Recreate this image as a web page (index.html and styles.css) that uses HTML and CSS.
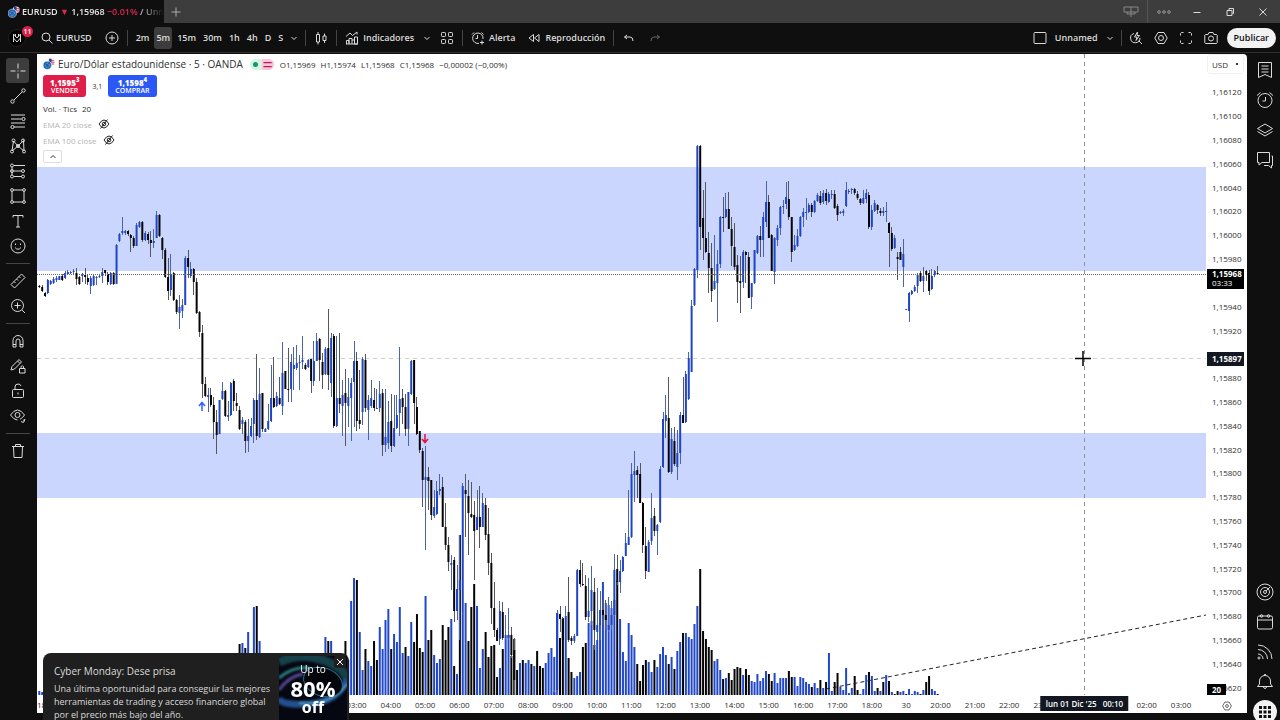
FILE: index.html
```html
<!DOCTYPE html>
<html lang="es">
<head>
    <meta charset="UTF-8">
    <meta name="viewport" content="width=device-width, initial-scale=1.0">
    <title>EURUSD 1,15968 −0.01% / Unnamed</title>
    <link rel="stylesheet" href="styles.css">
</head>
<body>
    <svg class="sprite" aria-hidden="true">
        <symbol id="chevron" viewBox="0 0 8 8"><path d="M1.5 3 4 5.5 6.5 3"/></symbol>
        <symbol id="pair" viewBox="0 0 14 14">
            <circle cx="9.5" cy="4.5" r="4" fill="#e9e4f0" stroke="none"/>
            <path d="M9 3h4M9 5h4.500M9 7h4" stroke="#d5475e" stroke-width="1"/>
            <path d="M7 1h3v4H7z" fill="#2b3f8f" stroke="none"/>
            <circle cx="5" cy="8.500" r="4.800" fill="#1d62b0" stroke="#fff" stroke-width=".6"/>
            <circle cx="5" cy="8.500" r="2.400" stroke="#9dc4ea" stroke-dasharray="1 1"/>
        </symbol>
    </svg>

    <div class="app">
        <header class="titlebar">
            <div class="tab">
                <svg class="pair-icon"><use href="#pair"/></svg>
                <span>EURUSD <span class="down">▼</span> 1,15968 <span class="down">−0.01%</span> / Unn</span>
            </div>
            <button class="new-tab" aria-label="Nueva pestaña"><svg viewBox="0 0 12 12"><path d="M6 1.500v9M1.500 6h9"/></svg></button>
            <div class="window-controls">
                <button aria-label="Diseño"><svg class="wide" viewBox="0 0 18 14"><path d="M2 2h14v5H2zM9 2v10M5 7v2h8V7"/></svg></button>
                <button class="more" aria-label="Más"><svg viewBox="0 0 14 14"><circle cx="2" cy="7" r="1.300"/><circle cx="7" cy="7" r="1.300"/><circle cx="12" cy="7" r="1.300"/></svg></button>
                <button aria-label="Minimizar"><svg viewBox="0 0 14 14"><path d="M3.500 7.500h7"/></svg></button>
                <button aria-label="Restaurar"><svg viewBox="0 0 14 14"><path d="M4 5.500h5v5H4zM6 5V3.500h4.500v5H9.500"/></svg></button>
                <button aria-label="Cerrar"><svg viewBox="0 0 14 14"><path d="m3.500 3.500 7 7M10.500 3.500l-7 7"/></svg></button>
            </div>
        </header>

        <nav class="toolbar">
            <button class="account" aria-label="Cuenta">
                <svg viewBox="0 0 18 18"><circle cx="9" cy="9" r="8.500" fill="#000" stroke="#222"/><path d="M5.500 13V5L9 9l3.500-4v8M5.500 9 9 13l3.500-4M7.500 5v3M10.500 5v3"/></svg>
                <span class="badge">11</span>
            </button>
            <button class="symbol"><svg viewBox="0 0 14 14"><circle cx="6" cy="6" r="4"/><path d="m9 9 3.500 3.500"/></svg>EURUSD</button>
            <button class="icon" aria-label="Comparar"><svg viewBox="0 0 14 14"><circle cx="7" cy="7" r="6"/><path d="M7 4v6M4 7h6"/></svg></button>
            <span class="sep"></span>
            <div class="intervals">
                <button>2m</button>
                <button class="active">5m</button>
                <button>15m</button>
                <button>30m</button>
                <button>1h</button>
                <button>4h</button>
                <button>D</button>
                <button>S</button>
                <button aria-label="Más intervalos"><svg class="chevron"><use href="#chevron"/></svg></button>
            </div>
            <span class="sep"></span>
            <button class="icon" aria-label="Velas"><svg viewBox="0 0 14 14"><path d="M2.500 3.500h3v7.500h-3zM4 1v2.500M4 11v2.500M9 5h3v4.500H9zM10.500 2.500V5M10.500 9.500V12"/></svg></button>
            <span class="sep"></span>
            <button class="labelled indicators"><svg viewBox="0 0 14 14"><path d="M1 5.500 5 2l2.500 2.500L12 1M12 1v2.500M1.500 13V9.500H4V13M4 13V7.500h3V13M7 9h2.500v4M9.500 13V6h3v7zM1 13h12"/></svg>Indicadores</button>
            <button class="drop" aria-label="Indicadores favoritos"><svg class="chevron"><use href="#chevron"/></svg></button>
            <button class="icon" aria-label="Plantillas"><svg viewBox="0 0 14 14"><rect x="1.500" y="1.500" width="4" height="4" rx=".8"/><rect x="8.500" y="1.500" width="4" height="4" rx=".8"/><rect x="1.500" y="8.500" width="4" height="4" rx=".8"/><rect x="8.500" y="8.500" width="4" height="4" rx=".8"/></svg></button>
            <span class="sep"></span>
            <button class="labelled"><svg viewBox="0 0 14 14"><path d="M8 12.300A5.200 5.200 0 1 1 12 8M6.500 4v3.500H4.500M1 3.500 3 1.500M10.500 1.500l2 2M11 9.500v4M9 11.500h4"/></svg>Alerta</button>
            <button class="labelled replay"><svg viewBox="0 0 14 14"><path d="M6.500 3.500v7L2 7zM12 3.500v7L7.500 7z"/></svg>Reproducción</button>
            <span class="sep"></span>
            <button class="icon" aria-label="Deshacer"><svg viewBox="0 0 14 14"><path d="M5 4 2.500 6 5 8M2.500 6H8q3 0 3 4"/></svg></button>
            <button class="icon dim" aria-label="Rehacer"><svg viewBox="0 0 14 14"><path d="M9 4l2.500 2L9 8M11.500 6H6q-3 0-3 4"/></svg></button>

            <div class="toolbar-right">
                <button class="labelled" aria-label="Distribución"><svg viewBox="0 0 14 14"><rect x="1" y="1.500" width="12" height="11" rx="1"/></svg></button>
                <button class="layout-name">Unnamed</button>
                <button class="drop" aria-label="Gestionar diseños"><svg class="chevron"><use href="#chevron"/></svg></button>
                <span class="sep"></span>
                <button class="icon" aria-label="Búsqueda rápida"><svg viewBox="0 0 14 14"><path d="M5 2.500A4.700 4.700 0 1 0 11 7M9.700 9.700 13 13M8.500 1 5.500 6H8L7 9.500 10.500 4.500H8z"/></svg></button>
                <button class="icon" aria-label="Ajustes"><svg viewBox="0 0 14 14"><path d="M4 1.500h6L13.200 7 10 12.500H4L.8 7z"/><circle cx="7" cy="7" r="2.500"/></svg></button>
                <button class="icon" aria-label="Pantalla completa"><svg viewBox="0 0 14 14"><path d="M1.500 4.500v-2l1-1h2M9.500 1.500h2l1 1v2M12.500 9.500v2l-1 1h-2M4.500 12.500h-2l-1-1v-2"/></svg></button>
                <button class="icon" aria-label="Captura"><svg viewBox="0 0 14 14"><path d="M1.500 3.500H4L5 1.500h4l1 2h2.500l.7.7v7.600l-.7.700H1.500l-.7-.7V4.200z"/><circle cx="7" cy="7.500" r="2.500"/></svg></button>
                <button class="publish">Publicar</button>
            </div>
        </nav>

        <aside class="drawing-bar">
            <button class="active" aria-label="Cursor"><svg viewBox="0 0 18 18"><path d="M9 1.500v5M9 11.500v5M1.500 9h5M11.500 9h5M9 8.500v1"/></svg></button>
            <button aria-label="Línea de tendencia"><svg viewBox="0 0 18 18"><circle cx="3.500" cy="14.500" r="1.700"/><circle cx="14.500" cy="3.500" r="1.700"/><path d="m5 13 8-8"/></svg></button>
            <button aria-label="Fibonacci"><svg viewBox="0 0 18 18"><path d="M2 3h14M2 7h10.500M2 11h14M5 15h11"/><circle cx="14.500" cy="7" r="1.600"/><circle cx="3.500" cy="15" r="1.600"/></svg></button>
            <button aria-label="Patrones"><svg viewBox="0 0 18 18"><path d="M3 14 4.500 4 9 9l5.500-5.500L15 14 9 9z"/><circle cx="3" cy="14.500" r="1.500"/><circle cx="4.500" cy="3.500" r="1.500"/><circle cx="9" cy="9" r="1.500"/><circle cx="14" cy="3.500" r="1.500"/><circle cx="15" cy="14.500" r="1.500"/></svg></button>
            <button aria-label="Predicción"><svg viewBox="0 0 18 18"><path d="M5 3.500h11M5 9h7.500M5 14.500h7.500M3 5v8"/><circle cx="3" cy="3.500" r="1.500"/><circle cx="3" cy="9" r="1.500"/><circle cx="3" cy="14.500" r="1.500"/><circle cx="14" cy="9" r="1.500"/><circle cx="14" cy="14.500" r="1.500"/></svg></button>
            <button aria-label="Formas"><svg viewBox="0 0 18 18"><path d="M4 3h10M4 15h10M3 4v10M15 4v10"/><circle cx="3" cy="3" r="1.400"/><circle cx="15" cy="3" r="1.400"/><circle cx="3" cy="15" r="1.400"/><circle cx="15" cy="15" r="1.400"/></svg></button>
            <button aria-label="Texto"><svg viewBox="0 0 18 18"><path d="M4 5.500V3.500h10v2M9 3.500v11.500M7 15h4"/></svg></button>
            <button aria-label="Iconos"><svg viewBox="0 0 18 18"><circle cx="9" cy="9" r="7"/><path d="M6 10.500q3 3.500 6 0M6.500 6.500v1.500M11.500 6.500v1.500"/></svg></button>
            <hr>
            <button aria-label="Medir"><svg viewBox="0 0 18 18"><path d="M2 12.500 12.500 2 16 5.500 5.500 16zM5 9.500l1.500 1.500M7.500 7 9 8.500M10 4.500 11.500 6"/></svg></button>
            <button aria-label="Ampliar"><svg viewBox="0 0 18 18"><circle cx="8.500" cy="8.500" r="6"/><path d="m13 13 3 3M8.500 5.500v6M5.500 8.500h6"/></svg></button>
            <hr>
            <button aria-label="Imán"><svg viewBox="0 0 18 18"><path d="M4 15V8.500a5 5 0 0 1 10 0V15h-3V9a2 2 0 0 0-4 0v6zM4 12.500h3M11 12.500h3"/></svg></button>
            <button aria-label="Modo dibujo"><svg viewBox="0 0 18 18"><path d="m2 13 1-3.500L10 2.500 12.500 5l-7 7zM8.500 4 11 6.500M10.500 11.500H16V16h-5.500zM12 11.500V9.500q1.300-1.500 2.500 0v2"/></svg></button>
            <button aria-label="Bloquear"><svg viewBox="0 0 18 18"><rect x="3.500" y="7.500" width="11" height="8" rx="1"/><path d="M6 7.500V5q0-3 3-3 2.500 0 3 2M9 10.500v2"/></svg></button>
            <button aria-label="Ocultar"><svg viewBox="0 0 18 18"><path d="M1.500 8q3.500-5 7-5t7 5q-2 3-4.500 4.300M8.500 13Q5 13 1.500 8M12 14.500l2.500 1 1.500-3-2 1"/><circle cx="8.500" cy="8" r="2.500"/></svg></button>
            <hr>
            <button aria-label="Eliminar"><svg viewBox="0 0 18 18"><path d="M3 4.500h12M6.500 4.500v-2h5v2M4.500 4.500l.5 11h8l.5-11"/></svg></button>
        </aside>

        <main class="chart">
            <div class="plot">
                <svg class="canvas" viewBox="0 0 1169 641" preserveAspectRatio="none" role="img" aria-label="Gráfico EURUSD 5 minutos">
                    <rect class="zone" x="0" y="113" width="1169" height="104"/>
                    <rect class="zone" x="0" y="379" width="1169" height="65"/>
                    <path class="cross-h" d="M0 304.500H1169"/>
                    <g id="volume"></g>
                    <g id="candles"></g>
                    <path class="last-price" d="M0 220.500H1169"/>
                    <path class="trend" d="M789 635 1169 561"/>
                    <path class="cross-v" d="M1047.500 0V641"/>
                    <path class="buy-mark" d="M165 357v-8M162 352l3-3.500 3 3.500"/>
                    <path class="sell-mark" d="M388 380v8M385 385l3 3.500 3-3.500"/>
                    <path class="pointer" d="M1046 297v15M1038 304.500h16"/>
                </svg>

                <section class="legend">
                    <h1>
                        <svg class="pair-icon"><use href="#pair"/></svg>
                        <span class="name">Euro/Dólar estadounidense · 5 · OANDA</span>
                        <span class="market"><i class="open"></i><i class="delay">=</i></span>
                        <span class="ohlc"><span>O1,15969</span><span>H1,15974</span><span>L1,15968</span><span>C1,15968</span><span>−0,00002 (−0,00%)</span></span>
                    </h1>
                    <div class="trade">
                        <button class="sell"><b>1,1595<sup>3</sup></b>VENDER</button>
                        <span class="spread">3,1</span>
                        <button class="buy"><b>1,1598<sup>4</sup></b>COMPRAR</button>
                    </div>
                    <p>Vol. · Tics <span class="value">20</span></p>
                    <p class="muted">EMA 20 close <svg class="eye" viewBox="0 0 12 12"><path d="M1 6q2.500-4 5-4t5 4q-2.500 4-5 4T1 6zM2.500 10.500l7-9"/><circle cx="6" cy="6" r="1.800"/></svg></p>
                    <p class="muted">EMA 100 close <svg class="eye" viewBox="0 0 12 12"><path d="M1 6q2.500-4 5-4t5 4q-2.500 4-5 4T1 6zM2.500 10.500l7-9"/><circle cx="6" cy="6" r="1.800"/></svg></p>
                    <button class="collapse" aria-label="Contraer"><svg class="chevron up"><use href="#chevron"/></svg></button>
                </section>
            </div>

            <div class="price-axis">
                <select aria-label="Divisa"><option>USD</option></select>
                <ol id="prices"></ol>
                <button class="axis-settings" aria-label="Ajustes de escala"><svg viewBox="0 0 14 14"><path d="M4 1.500h6L13.200 7 10 12.500H4L.8 7z"/><circle cx="7" cy="7" r="2"/></svg></button>
                <div class="tag last"><b>1,15968</b>03:33</div>
                <div class="tag cursor"><b>1,15897</b></div>
                <div class="tag vol"><b>20</b></div>
            </div>

            <div class="time-axis">
                <ol id="hours"></ol>
                <div class="time-tag"><span>lun 01 Dic '25</span><span>00:10</span></div>
            </div>
        </main>

        <aside class="side-bar">
            <div>
                <button aria-label="Lista de seguimiento"><svg viewBox="0 0 18 18"><path d="M2.500 1.500h13v15l-6.500-3-6.500 3zM5.500 5h7M5.500 8h7M5.500 11h7"/></svg></button>
                <button aria-label="Alertas"><svg viewBox="0 0 18 18"><circle cx="9" cy="9.500" r="7"/><path d="M9.500 6v4h-3M1 4.500 4.500 1.500M13.500 1.500 17 4.500"/></svg></button>
                <button aria-label="Árbol de objetos"><svg viewBox="0 0 18 18"><path d="m9 3 7.500 4.500L9 12 1.500 7.500zM1.500 10.500 9 15l7.500-4.500"/></svg></button>
                <button aria-label="Chats"><svg viewBox="0 0 18 18"><path d="M1.500 1.500h12v10H6L3 14v-2.500H1.500zM15.500 5h1v9.500h-1V17l-3-2.500H8"/></svg></button>
            </div>
            <div class="lower">
                <button aria-label="Analizadores"><svg viewBox="0 0 18 18"><circle cx="9" cy="9" r="8"/><circle cx="9" cy="9" r="4.500"/><circle cx="9" cy="9" r="1.500"/><path d="m10 8 4-4"/></svg></button>
                <button aria-label="Calendario"><svg viewBox="0 0 18 18"><rect x="1.500" y="3" width="15" height="13" rx="1.500"/><path d="M1.500 7h15"/><circle cx="5.500" cy="3" r="1.300"/><circle cx="12.500" cy="3" r="1.300"/></svg></button>
                <button aria-label="Noticias"><svg viewBox="0 0 18 18"><path d="M2 2a14 14 0 0 1 14 14M2 6.500A9.500 9.500 0 0 1 11.500 16M2 11a5 5 0 0 1 5 5"/><circle cx="3" cy="15" r="1"/></svg></button>
                <button aria-label="Notificaciones"><svg viewBox="0 0 18 18"><path d="M1.500 13.500h15l-2-2.500V8a5.500 5.500 0 0 0-11 0v3zM7 13.500q2 4 4 0M8 2.500 9 1l1 1.500"/></svg></button>
                <button class="apps" aria-label="Productos"><svg viewBox="0 0 18 18"><path d="M3 3h3v3H3zM7.500 3h3v3h-3zM12 3h3v3h-3zM3 7.500h3v3H3zM7.500 7.500h3v3h-3zM12 7.500h3v3h-3zM3 12h3v3H3zM7.500 12h3v3h-3zM12 12h3v3h-3z"/></svg></button>
            </div>
        </aside>
    </div>

    <aside class="toast">
        <div class="toast-text">
            <h2>Cyber Monday: Dese prisa</h2>
            <p>Una última oportunidad para conseguir las mejores herramientas de trading y acceso financiero global por el precio más bajo del año.</p>
        </div>
        <div class="promo">
            <svg viewBox="0 0 68 70" preserveAspectRatio="none" aria-hidden="true">
                <g class="glow">
                    <path d="M0 6Q22-4 44 4T68 24" stroke="#16404a" stroke-width="9"/>
                    <path d="M0 22Q14 10 30 12" stroke="#2b7f86" stroke-width="3"/>
                    <path d="M68 24Q58 46 30 48T0 42" stroke="#234f8e" stroke-width="7"/>
                    <path d="M68 28Q52 50 20 47" stroke="#57a6c9" stroke-width="2"/>
                    <path d="M0 34q10-14 24-16" stroke="#5a489a" stroke-width="3"/>
                </g>
                <ellipse cx="44" cy="26" rx="20" ry="14" fill="#04060c" stroke="#2a6d8c" transform="rotate(20 44 26)"/>
            </svg>
            <div class="promo-text"><span>Up to</span><strong>80%</strong><b>off</b></div>
        </div>
        <button class="close" aria-label="Cerrar"><svg viewBox="0 0 10 10"><path d="m2 2 6 6M8 2 2 8"/></svg></button>
    </aside>

    <script src="chart.js"></script>
</body>
</html>
```

FILE: styles.css
```css
* {
    box-sizing: border-box;
}
body {
    margin: 0;
    background: #0f0f0f;
    color: #dbdbdb;
    font-family: "Open Sans", "Noto Sans", sans-serif;
    font-size: 9px;
    overflow: hidden;
}
button {
    display: flex;
    align-items: center;
    justify-content: center;
    padding: 0;
    border: 0;
    background: none;
    color: inherit;
    font: inherit;
    cursor: pointer;
}
ol {
    margin: 0;
    padding: 0;
    list-style: none;
}
svg {
    width: 14px;
    height: 14px;
    flex: none;
    fill: none;
    stroke: currentColor;
    stroke-width: 1;
}
.sprite {
    position: absolute;
    width: 0;
    height: 0;
}
.chevron {
    width: 8px;
    height: 8px;
}
.up {
    transform: rotate(180deg);
}
.app {
    display: grid;
    grid-template: 23px 30px 1fr / 37px 1fr 33px;
    height: 100vh;
}

/* Title bar */
.titlebar {
    grid-column: 1 / -1;
    display: flex;
    background: #3d3d3d;
}
.tab {
    display: flex;
    align-items: center;
    gap: 2px;
    width: 164px;
    padding: 0 8px;
    background: #0f0f0f;
    color: #e6e6e6;
    font-weight: 600;
    white-space: nowrap;
    overflow: hidden;
}
.tab > span {
    -webkit-mask-image: linear-gradient(90deg, #000 80%, transparent);
    mask-image: linear-gradient(90deg, #000 80%, transparent);
}
.down {
    color: #e0284f;
}
.pair-icon {
    width: 12px;
    height: 12px;
}
.new-tab {
    width: 23px;
    color: #aaa;
}
.new-tab svg {
    width: 12px;
    height: 12px;
}
.window-controls {
    display: flex;
    margin-left: auto;
    padding-right: 1px;
}
.window-controls button {
    width: 33px;
}
.window-controls .more {
    border-left: 1px solid #555;
    color: #999;
}
.window-controls .wide {
    width: 18px;
    color: #888;
}

/* Top toolbar */
.toolbar {
    grid-column: 1 / -1;
    display: flex;
    align-items: center;
    font-weight: 600;
    border-bottom: 1px solid #303030;
}
.account {
    position: relative;
    width: 34px;
    height: 28px;
}
.account svg {
    width: 18px;
    height: 18px;
}
.badge {
    position: absolute;
    top: 2px;
    left: 22px;
    min-width: 11px;
    border-radius: 6px;
    background: #d81f48;
    color: #fff;
    font-size: 7px;
    line-height: 11px;
}
.symbol {
    gap: 2px;
    padding: 0 7px 0 6px;
}
.icon {
    width: 26px;
    height: 24px;
}
.sep {
    width: 1px;
    height: 16px;
    margin: 0 2px;
    background: #444;
}
.intervals {
    display: flex;
    gap: 3px;
    padding: 0 3px 0 4px;
}
.intervals button {
    height: 22px;
    padding: 0 2px;
    border-radius: 3px;
}
.intervals .active {
    background: #3d3d3d;
}
.labelled {
    gap: 4px;
    padding: 0 6px;
}
.drop {
    width: 14px;
    height: 24px;
}
.dim {
    color: #666;
}
.toolbar-right {
    display: flex;
    align-items: center;
    margin-left: auto;
    padding-right: 4px;
}
.toolbar-right .labelled {
    padding: 0 5px;
}
.toolbar-right .icon {
    width: 25px;
}
.toolbar-right .drop {
    width: 18px;
}
.layout-name {
    padding: 0 3px;
}
.publish {
    height: 20px;
    margin-left: 3px;
    padding: 0 7px;
    border-radius: 10px;
    background: #f2f2f2;
    color: #0f0f0f;
}

/* Drawing tools */
.drawing-bar {
    display: flex;
    flex-direction: column;
    align-items: center;
    padding: 5px 2px 0 0;
}
.drawing-bar button {
    width: 23px;
    height: 25px;
    border-radius: 3px;
}
.drawing-bar .active {
    background: #3d3d3d;
}
.drawing-bar svg,
.side-bar svg {
    width: 18px;
    height: 18px;
}
.drawing-bar hr {
    width: 24px;
    margin: 5px 0 4px;
    border: 0;
    border-top: 1px solid #444;
}

/* Chart */
.chart {
    display: grid;
    grid-template: 1fr 18px / 1fr 41px;
    margin: 1px 0 7px;
    border-radius: 0 4px 0 0;
    background: #fff;
    color: #2e2e2e;
    overflow: hidden;
}
.plot {
    position: relative;
    min-height: 0;
}
.canvas {
    display: block;
    position: absolute;
    width: 100%;
    height: 100%;
}
.zone {
    fill: #cad6fe;
    stroke: none;
}
.up-bar {
    fill: #1f45c4;
    stroke: none;
}
.down-bar {
    fill: #050505;
    stroke: none;
}
.volume-bar {
    fill: #2148c8;
    stroke: none;
}
.wick-up {
    stroke: #4a64b0;
}
.wick-down {
    stroke: #55565e;
}
.last-price {
    stroke: #666;
    stroke-dasharray: 1 1;
}
.cross-h {
    stroke: #d0d0d0;
    stroke-dasharray: 4 4;
}
.cross-v {
    stroke: #8d8f99;
    stroke-dasharray: 4 4;
}
.trend {
    stroke: #222;
    stroke-dasharray: 4 3;
}
.buy-mark {
    stroke: #2962ff;
    stroke-width: 1.5;
}
.sell-mark {
    stroke: #e0103c;
    stroke-width: 1.5;
}
.pointer {
    stroke: #000;
    stroke-width: 1.5;
}
.legend {
    position: absolute;
    top: 3px;
    left: 6px;
}
.legend h1 {
    display: flex;
    align-items: center;
    gap: 3px;
    height: 14px;
    margin: 0 0 4px;
    font-weight: 400;
    white-space: nowrap;
}
.name {
    font-size: 10px;
}
.market {
    display: flex;
    margin: 0 3px 0 4px;
    border-radius: 6px;
    background: #d8f2e6;
    overflow: hidden;
}
.market i {
    display: flex;
    align-items: center;
    justify-content: center;
    width: 12px;
    height: 11px;
    font-style: normal;
}
.open::before {
    content: "";
    width: 5px;
    height: 5px;
    border-radius: 50%;
    background: #0c9b6c;
}
.delay {
    background: #f9c6da;
    color: #c2185b;
}
.ohlc {
    display: flex;
    gap: 5px;
    font-size: 8px;
}
.trade {
    display: flex;
    align-items: center;
    gap: 6px;
    margin-bottom: 3px;
}
.trade button {
    flex-direction: column;
    height: 22px;
    padding: 0 7px;
    border-radius: 3px;
    color: #fff;
    font-size: 7px;
    font-weight: 600;
    line-height: 9px;
}
.trade b {
    font-size: 8px;
}
.trade .sell {
    background: #df1f49;
}
.trade .buy {
    background: #2b57f5;
}
.trade sup {
    font-size: 6px;
    line-height: 6px;
}
.spread {
    font-size: 7px;
}
.legend p {
    display: flex;
    align-items: center;
    height: 16px;
    margin: 0;
    font-size: 8px;
}
.legend .value {
    margin-left: 5px;
}
.legend .muted {
    gap: 6px;
    color: #b4b4b4;
}
.eye {
    width: 12px;
    height: 12px;
    color: #222;
}
.collapse {
    width: 19px;
    height: 13px;
    margin-top: 2px;
    border: 1px solid #ddd;
    border-radius: 2px;
    background: #fff;
}

/* Axes */
.price-axis {
    position: relative;
    grid-row: 1 / 3;
    grid-column: 2;
    display: flex;
    flex-direction: column;
    font-size: 8px;
}
.price-axis select {
    height: 20px;
    margin: 0 3px 6px 1px;
    padding: 0 4px;
    border: 1px solid #f0f0f0;
    border-radius: 3px;
    appearance: none;
    background: linear-gradient(45deg, transparent 50%, #333 50%) no-repeat right 5px center / 3px 3px, #fff;
    color: #2e2e2e;
    font: inherit;
}
#prices {
    flex: 1;
    display: flex;
    flex-direction: column;
}
#prices li {
    flex: 1;
    display: flex;
    align-items: center;
    padding-left: 6px;
}
.axis-settings {
    height: 14px;
}
.axis-settings svg {
    width: 10px;
    height: 10px;
}
.tag {
    position: absolute;
    left: 1px;
    padding: 1px 5px;
    background: #000;
    color: #fff;
    line-height: 9px;
}
.tag b {
    display: block;
}
.tag.last {
    top: 32.6%;
    right: 3px;
    padding: 0 5px 2px;
}
.tag.cursor {
    top: 45.2%;
    right: 3px;
    padding: 2px 5px 3px;
    background: #131722;
}
.tag.vol {
    bottom: 18px;
}
.time-axis {
    position: relative;
    grid-column: 1;
    grid-row: 2;
    min-width: 0;
    font-size: 8px;
    overflow: hidden;
}
#hours {
    display: flex;
    height: 18px;
    margin-left: -7px;
}
#hours li {
    display: flex;
    align-items: center;
    justify-content: center;
    flex: 1 1 0;
    min-width: 0;
}
#hours li:last-child {
    flex-grow: .23;
}
.time-tag {
    position: absolute;
    top: 1px;
    left: 89.6%;
    display: flex;
    gap: 6px;
    padding: 0 5px;
    background: #131722;
    color: #fff;
    font-weight: 600;
    line-height: 15px;
    white-space: nowrap;
    transform: translateX(-50%);
}

/* Right side bar */
.side-bar {
    display: flex;
    flex-direction: column;
    justify-content: space-between;
    padding-top: 2px;
    margin-left: 3px;
    min-height: 0;
}
.side-bar button {
    width: 30px;
    height: 30px;
}
.side-bar .lower {
    margin-bottom: -7px;
}
.side-bar .apps {
    width: 24px;
    height: 24px;
    margin: 3px;
    border-radius: 50%;
    background: #f2f2f2;
}
.side-bar .apps svg {
    fill: #0f0f0f;
    stroke: none;
}

/* Promo toast */
.toast {
    position: fixed;
    bottom: 0;
    left: 43px;
    display: flex;
    align-items: flex-start;
    height: 67px;
    padding: 3px 2px 0 11px;
    border-radius: 8px 8px 0 0;
    background: #1f1f1f;
    overflow: hidden;
}
.toast-text {
    width: 225px;
}
.toast h2 {
    margin: 7px 0 3px;
    font-size: 10px;
    font-weight: 400;
    line-height: 16px;
}
.toast p {
    margin: 0;
    font-size: 9px;
    line-height: 13px;
}
.promo {
    position: relative;
    width: 68px;
    height: 70px;
    background: #050811;
    color: #fff;
}
.promo svg {
    display: block;
    width: 100%;
    height: 100%;
}
.glow {
    filter: blur(1px);
}
.promo-text {
    position: absolute;
    inset: 5px 0 0;
    display: flex;
    flex-direction: column;
    align-items: center;
    font-size: 10px;
    line-height: 16px;
}
.promo-text strong {
    font-size: 22px;
    line-height: 22px;
}
.promo-text b {
    font-size: 16px;
}
.close {
    position: absolute;
    top: 3px;
    right: 3px;
    width: 12px;
    height: 12px;
    border-radius: 2px;
    background: #1f1f1f;
    color: #fff;
}
.close svg {
    width: 10px;
    height: 10px;
}
```

FILE: chart.js
```js
const SVG = 'http://www.w3.org/2000/svg';
const STEP = 2.861;
const FIRST = -231;
const ORIGIN_X = 662.2;
const BASE_Y = 641;
const OFFSET_Y = 54;

// Each candle is [open, high, low, close] in screen rows, one per 5 minutes
const candles = [
    [286,285,288,287],[287,285,292,291],[293,292,297,296],[293,279,294,280],[284,280,285,281],[283,277,284,279],[280,276,282,278],[280,276,280,276],
    [276,274,281,280],[278,271,279,273],[274,270,275,272],[273,271,274,272],[272,269,274,271],[273,268,285,279],[277,276,285,284],[276,273,282,275],
    [275,268,284,277],[278,274,285,282],[286,276,294,278],[285,275,286,276],[278,276,285,277],[277,275,278,276],[276,268,283,272],[270,270,276,273],
    [274,272,285,282],[284,272,285,273],[273,272,285,284],[284,244,284,245],[241,233,242,234],[233,217,235,231],[233,230,235,231],[231,230,236,234],
    [235,234,252,238],[238,236,248,246],[246,223,246,225],[227,221,228,222],[222,221,242,240],[240,231,241,233],[234,232,244,240],[240,231,257,243],
    [243,229,248,241],[238,211,238,215],[215,214,237,236],[238,237,259,250],[250,248,278,277],[277,258,300,291],[290,254,296,275],[273,272,301,300],
    [300,299,314,312],[313,295,329,307],[311,299,318,305],[305,256,305,258],[258,250,278,267],[276,262,278,269],[269,268,295,282],[282,278,314,313],
    [312,311,337,332],[333,325,398,384],[384,377,397,396],[397,388,412,395],[395,388,407,405],[405,397,439,422],[422,410,454,435],[434,400,434,400],
    [399,382,400,391],[391,390,417,416],[417,401,421,415],[415,382,416,383],[381,379,411,401],[403,393,411,406],[410,406,430,429],[424,417,434,420],
    [422,420,453,441],[441,419,452,436],[436,418,437,426],[424,398,443,400],[400,354,440,436],[437,368,438,394],[393,393,432,429],[432,428,432,429],
    [429,404,430,421],[421,365,422,398],[398,357,408,407],[406,392,407,396],[398,377,405,404],[406,342,415,373],[371,371,389,389],[389,348,402,390],
    [389,354,402,362],[369,347,390,365],[368,345,370,363],[363,355,390,362],[362,336,369,360],[365,363,370,369],[367,359,368,360],[359,359,393,381],
    [381,341,386,361],[361,333,361,341],[339,338,381,360],[362,353,389,375],[374,347,375,349],[348,309,390,375],[383,333,397,338],[336,334,428,426],
    [426,336,427,398],[398,333,413,404],[406,380,436,395],[393,369,446,403],[406,378,427,397],[398,378,441,383],[382,341,427,361],[361,352,431,421],
    [420,370,429,424],[412,357,425,359],[360,354,412,408],[410,395,440,400],[406,380,408,398],[400,388,411,408],[409,389,409,408],[408,381,412,394],
    [393,389,456,445],[445,389,452,437],[443,401,449,422],[421,394,452,446],[446,395,447,428],[428,395,429,415],[413,347,436,399],[398,389,424,407],
    [407,394,436,429],[429,392,446,392],[394,360,395,361],[360,360,424,403],[407,397,435,434],[431,431,453,450],[451,448,507,480],[480,446,550,477],
    [477,467,510,481],[480,480,520,515],[516,490,518,507],[514,481,515,491],[491,474,495,489],[487,477,527,527],[527,503,550,545],[545,537,571,562],
    [565,555,590,563],[560,557,622,611],[611,565,620,589],[590,535,640,580],[613,483,614,486],[490,474,537,494],[496,480,555,513],[514,482,518,517],
    [515,501,580,531],[530,490,530,517],[517,486,548,527],[527,493,527,503],[505,498,540,535],[534,508,575,563],[563,553,624,608],[608,582,637,630],
    [630,628,641,641],[639,601,645,611],[612,602,640,638],[638,615,640,635],[638,608,640,635],[635,627,658,655],[650,638,700,680],[705,700,720,715],
    [715,705,720,710],[710,705,720,715],[715,705,720,710],[712,705,720,709],[709,705,720,712],[712,705,720,709],[709,705,720,712],[712,705,720,714],
    [714,705,720,716],[716,705,720,712],[712,705,720,708],[708,700,715,702],[702,690,705,692],[690,610,695,613],[614,606,632,619],[619,617,640,640],
    [640,606,640,616],[612,577,642,640],[638,636,645,641],[641,634,643,636],[636,569,636,570],[570,560,587,584],[584,563,586,585],[586,575,620,617],
    [617,578,622,611],[611,566,625,590],[592,578,650,630],[632,588,640,625],[625,591,640,610],[610,600,625,615],[615,600,630,620],[630,597,632,625],
    [625,601,630,615],[615,554,616,570],[569,555,585,582],[582,560,593,571],[571,556,572,557],[556,533,556,543],[545,490,545,537],[537,463,538,474],
    [475,451,502,471],[470,466,498,475],[474,463,503,503],[503,502,553,545],[546,527,579,571],[572,540,572,542],[541,493,545,518],[516,508,536,531],
    [531,524,555,525],[522,466,523,469],[467,412,468,419],[421,395,438,415],[418,377,473,472],[472,428,474,439],[441,427,466,464],[467,430,480,453],
    [453,412,464,415],[415,377,423,423],[422,371,423,374],[399,352,400,358],[372,300,371,306],[305,268,306,269],[270,145,278,146],[146,145,250,227],
    [218,190,260,238],[238,182,253,252],[253,232,293,268],[268,243,302,291],[289,235,290,281],[283,250,322,264],[264,216,268,217],[217,197,232,218],
    [217,193,218,209],[209,192,229,229],[229,217,266,246],[247,223,270,267],[265,255,303,282],[281,256,313,283],[282,250,288,252],[252,251,283,255],
    [257,252,298,298],[297,283,309,283],[283,250,284,250],[253,235,254,236],[236,226,257,240],[240,212,257,217],[222,181,227,202],[202,195,238,238],
    [235,234,271,271],[272,237,284,238],[240,225,246,228],[228,206,235,207],[207,200,214,206],[204,182,209,197],[199,181,220,217],[217,217,262,252],
    [250,235,251,245],[246,229,247,236],[236,216,237,217],[217,208,227,212],[213,198,220,212],[212,203,213,205],[205,203,217,212],[212,200,213,201],
    [201,193,202,195],[196,191,205,203],[202,190,204,193],[193,189,205,201],[202,192,203,194],[195,190,199,194],[194,190,209,208],[206,204,221,215],
    [213,211,214,212],[213,209,216,211],[206,182,207,190],[192,189,194,191],[190,188,194,189],[189,188,195,193],[194,191,200,198],[199,198,205,203],
    [203,190,204,198],[199,189,203,193],[195,192,229,227],[227,205,230,210],[211,200,212,203],[205,204,214,210],[211,208,216,213],[213,207,216,211],
    [212,202,222,211],[223,222,267,233],[233,227,251,249],[248,235,249,238],[257,252,280,259],[252,247,260,260],[267,239,287,254],[310,309,310,309],
    [311,292,322,293],[294,290,295,291],[291,285,292,287],[286,273,293,275],[273,271,282,281],[281,267,292,276],[271,270,281,275],[273,270,295,291],
    [289,269,290,276],[275,270,277,271],[273,266,275,274]
];

// Tops of the volume bars, keyed by the index of the first bar in each run
const volumes = {
    '-231': '691b 692b',
    '-161': '644k 643b 648k 632b 660b 607b 606k 641b',
    '-131': '637b 641k 641b',
    '-124': '641k 660b 601b 578b 580k 632b 670b 649k 661b 666b 641k 660k 627b 649b 620b 609b 649k 634b 642b 607b 653b 647k 656b 622b 642k 614k 648k 652k 596b 640k 630k 655b 663b 659b 625k 640k 627k 619b 666k 674b 535k 613b 603b 641k 607k 584k 606b 668b 649b 632k 657k 646k 645k 677k 668b 649k 638b 635b 656k 639k 670k 663b 660k 663b 660b 664k 666b 651k 666k 668k 663b 653b 648b 657b 613b 638k 618k 640b 658k 672k 678b 676b 672b 647k 643k 623b 621b 645k 640b 623b 582b 603b 605b 608b 600b 581k 619b 652b 661b 623b 635b 647b 664k 681k 665k 660k 662b 672b 660k 667b 654b 647b 655b 664k 657b 669k 651b 642b 633k 633b 637b 639b 624b 606b 569k 631k 639k 647k 650k 661b 659b 670b 679k 678b 673k 680k 669k 667k 668k 675b 669k 675k 681b 682b 674b 681b 678b 671b 674k 681k 673b 683b 678b 678b 678b 671k 677k 677b 686b 677b 678b 682b 684b 687k 683b 688b 680k 688b 682k 653b 691b 682k 673k 687b 690b 668b 693b 688b 676k 690k 694b 689b 675b 672k 676b 691b 688k 691b 682k 675b 681k 692b 694k 691k 692b 691b 694k 689b 694b 691b 692b 694k 690b 682k 676k 689b 691b 694k'
};

function add(parent, name, attrs) {
    const el = document.createElementNS(SVG, name);
    for (const key in attrs) {
        el.setAttribute(key, attrs[key]);
    }
    parent.appendChild(el);
}

function barX(index) {
    return ORIGIN_X + index * STEP;
}

const candleLayer = document.getElementById('candles');
candles.forEach(([open, high, low, close], i) => {
    const x = barX(FIRST + i);
    const rising = close < open;
    const top = Math.min(open, close) - OFFSET_Y;
    add(candleLayer, 'path', {
        class: rising ? 'wick-up' : 'wick-down',
        d: `M${Math.floor(x + 1) + 0.5} ${high - OFFSET_Y}V${low - OFFSET_Y}`
    });
    add(candleLayer, 'rect', {
        class: rising ? 'up-bar' : 'down-bar',
        x: x, y: top, width: 2, height: Math.max(1, Math.abs(open - close))
    });
});

const volumeLayer = document.getElementById('volume');
for (const start in volumes) {
    volumes[start].split(' ').forEach((bar, i) => {
        const y = parseInt(bar) - OFFSET_Y;
        add(volumeLayer, 'rect', {
            class: bar.endsWith('b') ? 'volume-bar' : 'down-bar',
            x: barX(Number(start) + i), y: y, width: 2, height: BASE_Y - y
        });
    });
}

// Axis labels
const prices = document.getElementById('prices');
for (let p = 116120; p >= 115620; p -= 20) {
    const li = document.createElement('li');
    li.textContent = '1,' + String(p).slice(1);
    prices.appendChild(li);
}

const hours = document.getElementById('hours');
for (let i = 0; i < 34; i++) {
    const li = document.createElement('li');
    const hour = (18 + i) % 24;
    li.textContent = i === 25 ? '30' : String(hour).padStart(2, '0') + ':00';
    hours.appendChild(li);
}
hours.appendChild(document.createElement('li'));
```
